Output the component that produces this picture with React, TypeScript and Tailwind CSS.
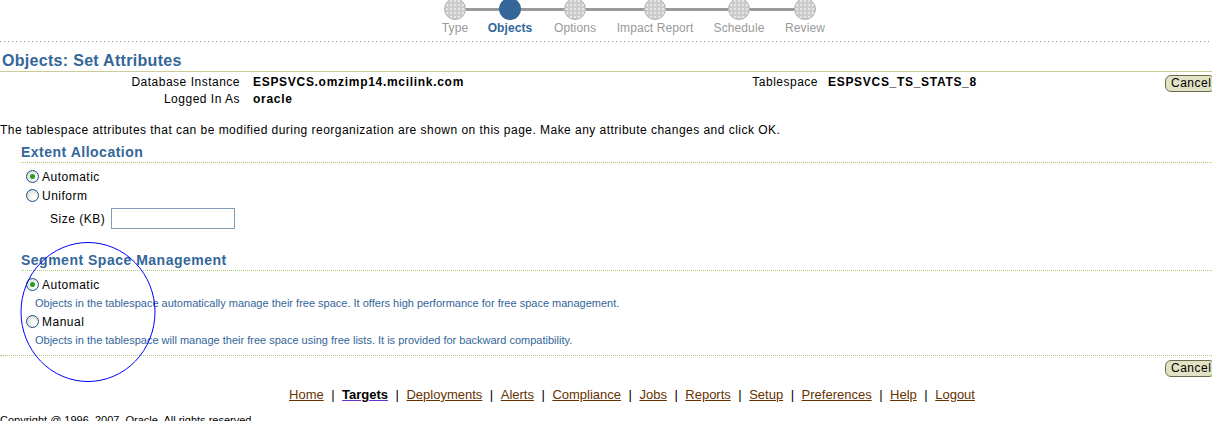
import React from "react";

const steps = [
  { label: "Type", w: "w-[50px]" },
  { label: "Objects", w: "w-[60px]", current: true },
  { label: "Options", w: "w-[70px]" },
  { label: "Impact Report", w: "w-[90px]" },
  { label: "Schedule", w: "w-[78px]" },
  { label: "Review", w: "w-[54px]" },
];

const links = [
  "Home",
  "Targets",
  "Deployments",
  "Alerts",
  "Compliance",
  "Jobs",
  "Reports",
  "Setup",
  "Preferences",
  "Help",
  "Logout",
];

function Radio({ checked }: { checked?: boolean }) {
  return (
    <span className="flex h-[13px] w-[13px] shrink-0 items-center justify-center rounded-full border border-[#1c5180] bg-[radial-gradient(circle_at_65%_65%,#ffffff_15%,#cfcfc6)]">
      {checked ? <span className="h-[5px] w-[5px] rounded-full bg-[#21a121]" /> : null}
    </span>
  );
}

function CancelButton() {
  return (
    <button
      type="button"
      className="h-[17px] w-[50px] shrink-0 rounded-[6px] border border-[#6b6b4a] bg-[#f4f4dc] bg-[radial-gradient(#d8d8b8_0.6px,transparent_0.9px)] bg-[length:2px_2px] pl-[5px] text-left text-[12px] leading-[15px] text-black"
    >
      Cancel
    </button>
  );
}

function Section({ title }: { title: string }) {
  return (
    <div className="ml-[21px] border-b border-dotted border-[#a9cc6a] pb-[2px] text-[14px] font-bold leading-[16px] tracking-[0.5px] text-[#336699]">
      {title}
    </div>
  );
}

export default function App() {
  return (
    <div className="relative h-[421px] w-[1212px] overflow-hidden bg-white font-['Liberation_Sans',Arial,sans-serif] text-[12px] tracking-[0.5px] text-black">
      {/* train */}
      <div className="flex h-[41px] pl-[430px] tracking-[0.1px]">
        {steps.map((s, i) => (
          <div key={s.label} className={`flex flex-col items-center ${s.w}`}>
            <div className="flex h-[20px] w-full items-start">
              <div className={`mt-[8px] h-[3px] flex-1 ${i === 0 ? "" : "bg-[#999999]"}`} />
              <div
                className={`-mt-[2px] h-[22px] w-[22px] shrink-0 rounded-full ${
                  s.current
                    ? "bg-[#336699]"
                    : "border border-[#b4b4b4] bg-[#cccccc] bg-[radial-gradient(#f4f4f4_0.6px,transparent_0.9px)] bg-[length:4px_4px]"
                }`}
              />
              <div className={`mt-[8px] h-[3px] flex-1 ${i === steps.length - 1 ? "" : "bg-[#999999]"}`} />
            </div>
            <div
              className={`mt-[1px] whitespace-nowrap leading-[14px] ${
                s.current ? "font-bold text-[#336699]" : "text-[#999999]"
              }`}
            >
              {s.label}
            </div>
          </div>
        ))}
      </div>
      <div className="h-px bg-[linear-gradient(to_right,#999999_1px,transparent_1px)] bg-[length:4px_1px]" />

      {/* title */}
      <div className="border-b border-[#cccc99] pb-[1px] pl-[2px] pt-[9px] text-[16px] font-bold leading-[19px] tracking-[0.3px] text-[#336699]">
        Objects: Set Attributes
      </div>

      {/* info */}
      <div className="mt-[2px] flex items-start">
        <div className="grid w-[720px] grid-cols-[240px_1fr] gap-x-[13px] leading-[17px]">
          <div className="text-right">Database Instance</div>
          <div className="font-bold tracking-[0.7px]">ESPSVCS.omzimp14.mcilink.com</div>
          <div className="text-right">Logged In As</div>
          <div className="font-bold tracking-[0.7px]">oracle</div>
        </div>
        <div className="w-[98px] text-right leading-[17px]">Tablespace</div>
        <div className="ml-[10px] font-bold leading-[17px] tracking-[0.7px]">ESPSVCS_TS_STATS_8</div>
        <div className="flex-1" />
        <div className="-mr-[3px]">
          <CancelButton />
        </div>
      </div>

      <p className="mt-[14px] leading-[16px] tracking-[0.47px]">
        The tablespace attributes that can be modified during reorganization are shown on this page. Make any attribute
        changes and click OK.
      </p>

      {/* extent allocation */}
      <div className="mt-[6px]">
        <Section title="Extent Allocation" />
      </div>
      <div className="ml-[26px] mt-[4px] flex flex-col">
        <label className="flex h-[19px] items-center gap-[3px]">
          <Radio checked />
          <span>Automatic</span>
        </label>
        <label className="flex h-[19px] items-center gap-[3px]">
          <Radio />
          <span>Uniform</span>
        </label>
      </div>
      <div className="ml-[50px] mt-[3px] flex items-center gap-[6px]">
        <span>Size (KB)</span>
        <input className="h-[21px] w-[124px] border border-[#7f9db9] bg-white px-1 text-[12px] outline-none" />
      </div>

      {/* segment space management */}
      <div className="mt-[23px]">
        <Section title="Segment Space Management" />
      </div>
      <div className="ml-[26px] mt-[4px] flex flex-col">
        <label className="flex h-[19px] items-center gap-[3px]">
          <Radio checked />
          <span>Automatic</span>
        </label>
        <div className="ml-[9px] text-[11px] leading-[18px] tracking-[0px] text-[#336699]">
          Objects in the tablespace automatically manage their free space. It offers high performance for free space
          management.
        </div>
        <label className="flex h-[19px] items-center gap-[3px]">
          <Radio />
          <span>Manual</span>
        </label>
        <div className="ml-[9px] text-[11px] leading-[18px] tracking-[0px] text-[#336699]">
          Objects in the tablespace will manage their free space using free lists. It is provided for backward
          compatibility.
        </div>
      </div>
      <div className="mt-[6px] border-b border-dotted border-[#a9cc6a]" />

      <div className="mt-[3px] flex justify-end">
        <div className="-mr-[3px]">
          <CancelButton />
        </div>
      </div>

      {/* footer */}
      <div className="mt-[10px] flex justify-center pl-[52px] text-[13px] leading-[16px] tracking-[0px]">
        {links.map((l, i) => (
          <span key={l} className="flex">
            {i > 0 ? <span className="px-[7.5px] text-black">|</span> : null}
            {l === "Targets" ? (
              <a className="font-bold text-black underline decoration-[#6633cc]">{l}</a>
            ) : (
              <a className="text-[#663300] underline">{l}</a>
            )}
          </span>
        ))}
      </div>
      <div className="mt-[9px] text-[11px] leading-[16px] tracking-[0px]">
        Copyright @ 1996, 2007, Oracle. All rights reserved.
      </div>

      {/* annotation */}
      <svg className="pointer-events-none absolute left-[20px] top-[242px]" width="137" height="141">
        <ellipse cx="68" cy="70" rx="67" ry="69.5" fill="none" stroke="#0000ff" strokeWidth="1" />
      </svg>
    </div>
  );
}
